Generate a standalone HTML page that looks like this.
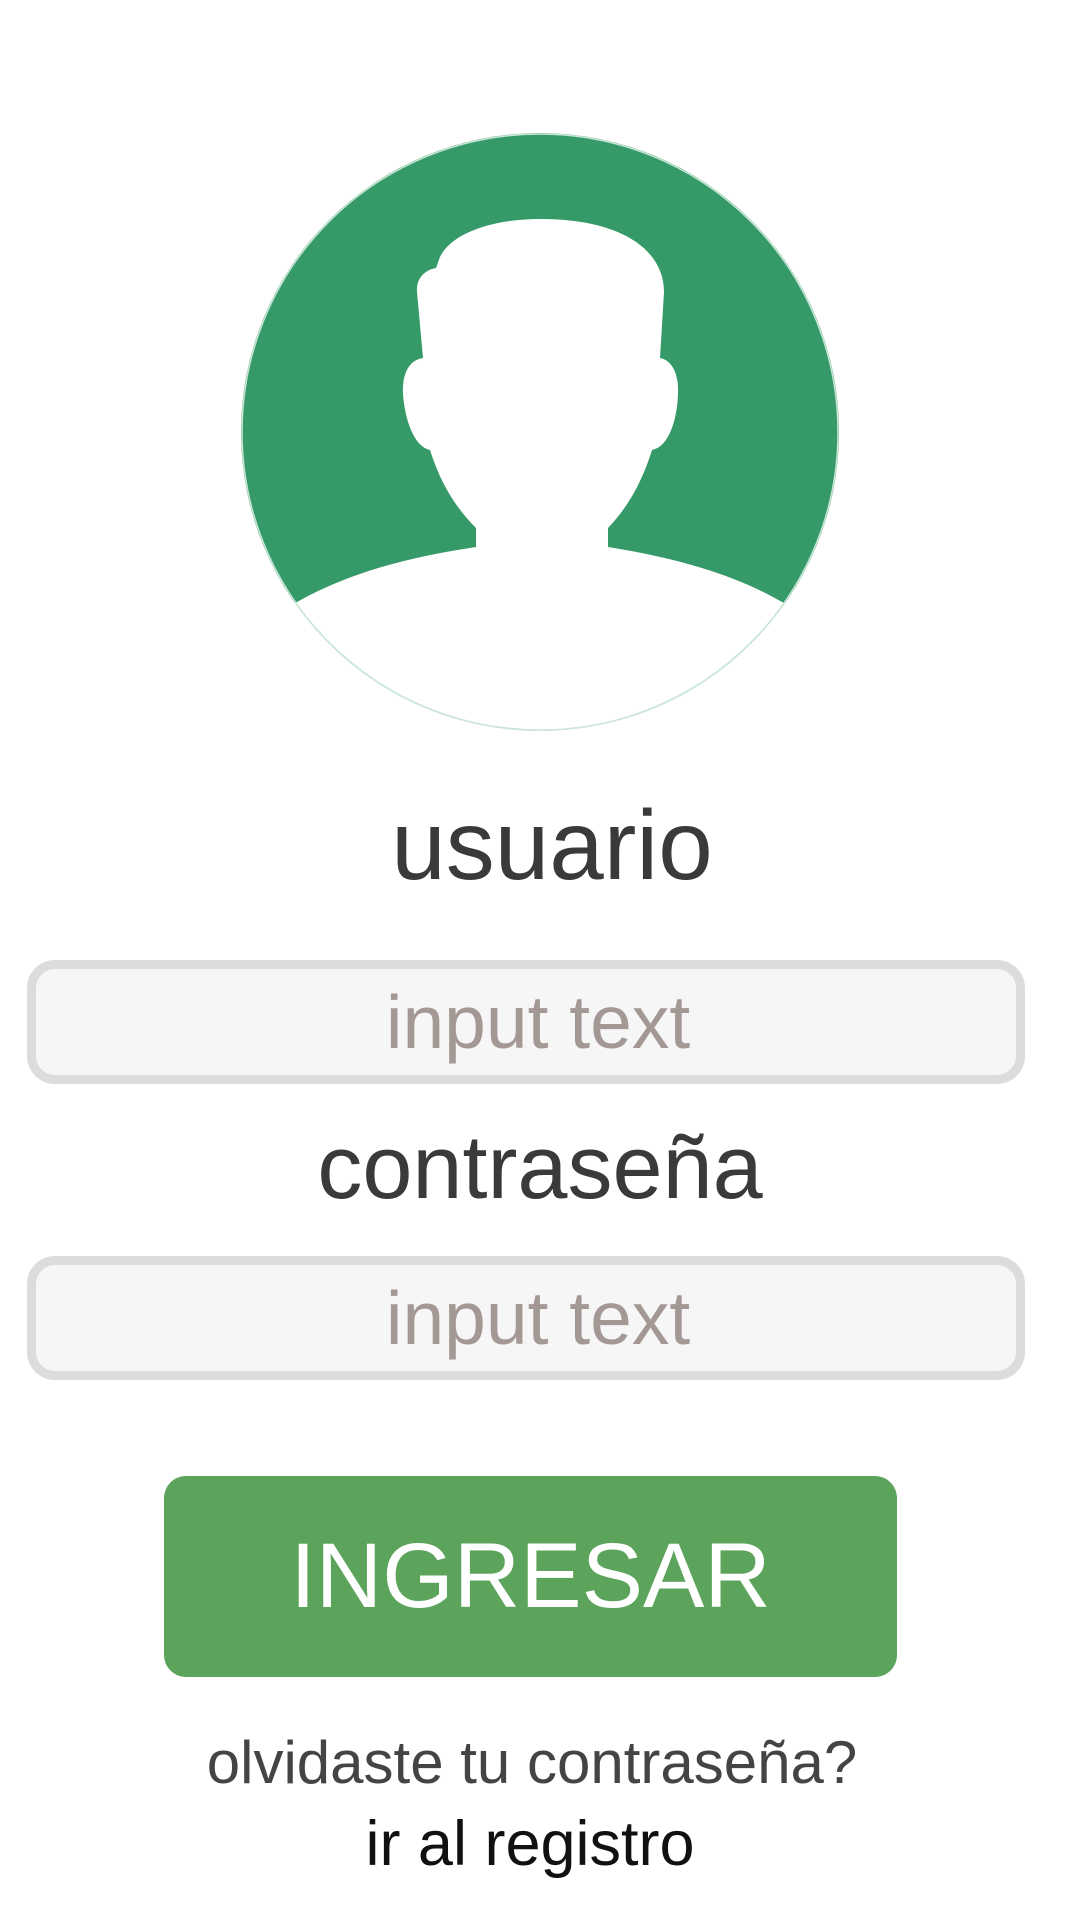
<!DOCTYPE html>
<html><head><meta charset="utf-8"><style>
body{margin:0;width:1080px;height:1920px;background:#fff;font-family:"Liberation Sans",sans-serif;position:relative;overflow:hidden}
.t{position:absolute;left:0;width:1080px;text-align:center}
.inp{position:absolute;left:27px;width:980px;height:106px;border:9px solid #dcdcdc;border-radius:28px;background:#f6f6f6;color:#a39894;font-size:75px;text-align:center;line-height:106px;box-sizing:content-box;padding-left:0}
.inp span{position:relative;left:12px}
</style></head><body>
<svg style="position:absolute;left:240px;top:132px" width="600" height="600" viewBox="0 0 600 600">
<defs><clipPath id="c"><circle cx="300" cy="300" r="299"/></clipPath></defs>
<circle cx="300" cy="300" r="299" fill="#359a68"/>
<g clip-path="url(#c)">
<path fill="#fff" d="M300 87C255 87 212 100 200 125L196 136C185 138 176 146 177 160L183 226C170 228 162 240 163 262C165 290 175 315 190 318C200 350 215 375 236 396L236 415C170 425 110 440 57 470L0 500L0 600L600 600L600 500L542 470C490 440 430 425 368 415L368 396C388 375 402 350 412 318C428 315 437 290 438 262C439 240 431 228 420 226L424 160C424 120 385 87 300 87Z"/>
</g>
<circle cx="300" cy="300" r="298" fill="none" stroke="#c9e6d6" stroke-width="1.5"/>
</svg>
<div class="t" style="top:785px;font-size:98px;color:#3a3a3a;line-height:120px;left:12px">usuario</div>
<div class="inp" style="top:960px"><span>input text</span></div>
<div class="t" style="top:1108px;font-size:90px;color:#3a3a3a;line-height:120px">contraseña</div>
<div class="inp" style="top:1256px"><span>input text</span></div>
<div style="position:absolute;left:164px;top:1476px;width:733px;height:201px;background:#5ca35c;border-radius:22px;color:#fff;font-size:92px;text-align:center;line-height:201px">INGRESAR</div>
<div class="t" style="top:1725px;font-size:60px;color:#444;line-height:76px;left:-8px">olvidaste tu contraseña?</div>
<div class="t" style="top:1806px;font-size:63px;color:#111;line-height:76px;left:-10px">ir al registro</div>
</body></html>
